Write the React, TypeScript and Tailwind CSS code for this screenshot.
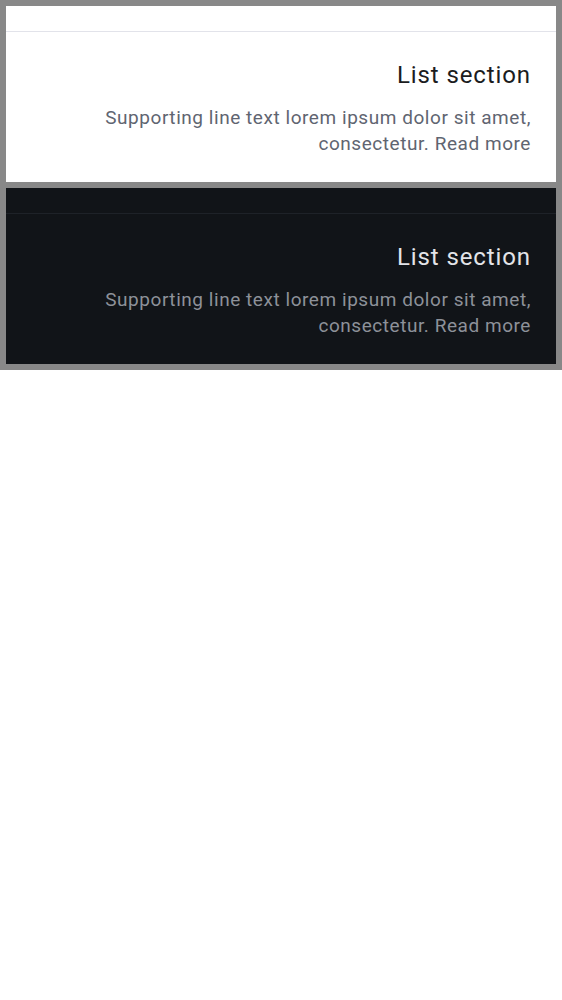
export default function App() {
  const panels = [
    { dark: false },
    { dark: true },
  ];

  return (
    <div className="bg-[#888888] p-[6px] flex flex-col gap-[6px]" style={{ fontFamily: 'Roboto, "Noto Sans", sans-serif' }}>
      {panels.map((p, i) => (
        <div key={i} className={p.dark ? 'bg-[#111418]' : 'bg-white'}>
          <div className={`h-[26px] border-b ${p.dark ? 'border-[#1e2228]' : 'border-[#e2e3ea]'}`} />
          <div className="pt-[25px] pb-[25px] pr-[25px] pl-6 text-right">
            <div className={`text-[24px] leading-[36px] tracking-[0.9px] ${p.dark ? 'text-[#e3e4e8]' : 'text-[#1b1c20]'}`}>List section</div>
            <p className={`mt-3 text-[19px] leading-[26px] tracking-[0.55px] ${p.dark ? 'text-[#8d9199]' : 'text-[#5f6571]'}`}>
              Supporting line text lorem ipsum dolor sit amet, consectetur. Read more
            </p>
          </div>
        </div>
      ))}
    </div>
  );
}
